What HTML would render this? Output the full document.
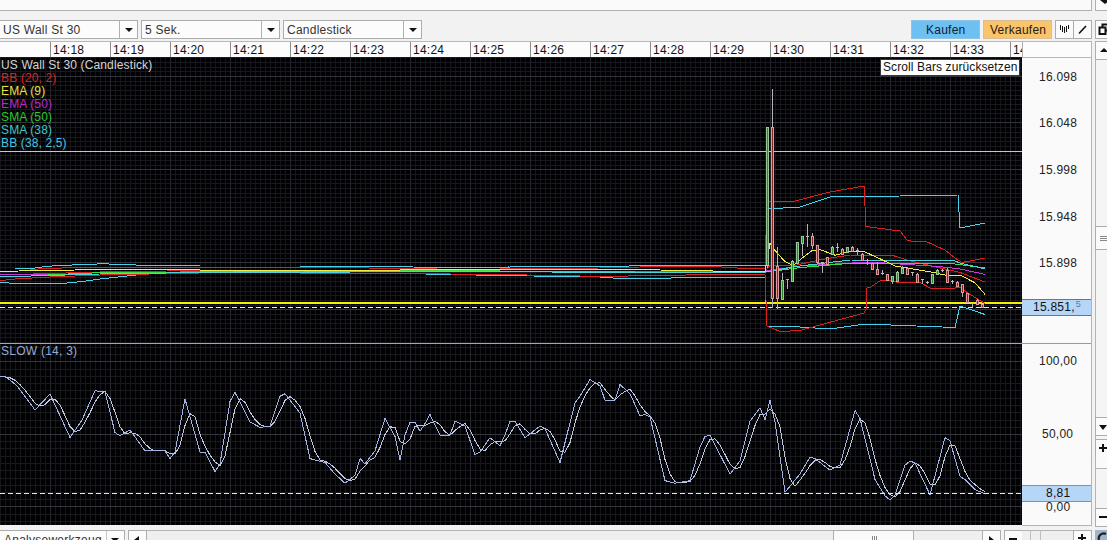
<!DOCTYPE html><html><head><meta charset="utf-8"><style>

html,body{margin:0;padding:0}
body{width:1107px;height:540px;overflow:hidden;position:relative;background:#f2f2f2;font-family:"Liberation Sans",sans-serif;font-size:12px;color:#222}
.a{position:absolute;box-sizing:border-box}
.t{position:absolute;white-space:nowrap;line-height:14px;letter-spacing:0.25px}
.cb{position:absolute;box-sizing:border-box;background:#fcfcfc;border:1px solid #acacac;height:19px}
.arr{position:absolute;width:0;height:0;border-left:4px solid transparent;border-right:4px solid transparent;border-top:4px solid #111}
.btn{position:absolute;box-sizing:border-box;background:#fbfbfb;border:1px solid #adadad}

</style></head><body>
<div class="a" style="left:-1px;top:-10px;width:1093px;height:21px;background:#fafafa;border:1px solid #b0b0b0"></div>
<div class="a" style="left:1095px;top:-10px;width:20px;height:21px;background:#fafafa;border:1px solid #b0b0b0"></div>
<div class="arr" style="left:1100px;top:0px;border-left-width:5px;border-right-width:5px;border-top-width:4px"></div>
<div class="cb" style="left:-1px;top:20px;width:139px"></div>
<div class="a" style="left:119px;top:21px;width:1px;height:17px;background:#b0b0b0"></div>
<div class="arr" style="left:125px;top:28px"></div>
<div class="t" style="left:3px;top:23px;color:#333">US Wall St 30</div>
<div class="cb" style="left:141px;top:20px;width:139px"></div>
<div class="a" style="left:261px;top:21px;width:1px;height:17px;background:#b0b0b0"></div>
<div class="arr" style="left:267px;top:28px"></div>
<div class="t" style="left:145px;top:23px;color:#333">5 Sek.</div>
<div class="cb" style="left:283px;top:20px;width:139px"></div>
<div class="a" style="left:403px;top:21px;width:1px;height:17px;background:#b0b0b0"></div>
<div class="arr" style="left:409px;top:28px"></div>
<div class="t" style="left:287px;top:23px;color:#333">Candlestick</div>
<div class="a" style="left:911px;top:20px;width:69px;height:19px;background:#6ec0f2;border:1px solid #8cc4e8"></div>
<div class="t" style="left:926px;top:23px;color:#0c1c3c">Kaufen</div>
<div class="a" style="left:983px;top:20px;width:69px;height:19px;background:#f8c46c;border:1px solid #dcbc94"></div>
<div class="t" style="left:990px;top:23px;color:#2c1c0c">Verkaufen</div>
<div class="btn" style="left:1055px;top:20px;width:19px;height:19px"></div>
<div class="btn" style="left:1073px;top:20px;width:19px;height:19px"></div>
<svg class="a" style="left:1055px;top:20px" width="40" height="19" viewBox="1055 20 40 19"><g fill="#111"><rect x="1060" y="25" width="1" height="5"/><rect x="1062" y="26" width="1" height="6"/><rect x="1064" y="27" width="1" height="6"/><rect x="1066" y="26" width="1" height="6"/><rect x="1068" y="25" width="1" height="4"/></g><line x1="1079" y1="33.5" x2="1086" y2="26" stroke="#111" stroke-width="1.6"/></svg>
<div class="btn" style="left:1095px;top:20px;width:20px;height:19px"></div>
<svg class="a" style="left:1095px;top:20px" width="12" height="19" viewBox="1095 20 12 19"><rect x="1102.5" y="24.5" width="8" height="6" fill="none" stroke="#111" stroke-width="2"/><rect x="1099.5" y="27.5" width="6" height="6.5" fill="#fbfbfb" stroke="#111" stroke-width="2"/></svg>
<div class="a" style="left:-1px;top:41px;width:1093px;height:17px;background:#fcfcfc;border:1px solid #b8b8b8;border-bottom:none"></div>
<div class="a" style="left:50px;top:42px;width:1px;height:15px;background:#8c8c8c"></div>
<div class="t" style="left:53px;top:43px;color:#111;width:60px;overflow:hidden">14:18</div>
<div class="a" style="left:110px;top:42px;width:1px;height:15px;background:#8c8c8c"></div>
<div class="t" style="left:113px;top:43px;color:#111;width:60px;overflow:hidden">14:19</div>
<div class="a" style="left:170px;top:42px;width:1px;height:15px;background:#8c8c8c"></div>
<div class="t" style="left:173px;top:43px;color:#111;width:60px;overflow:hidden">14:20</div>
<div class="a" style="left:230px;top:42px;width:1px;height:15px;background:#8c8c8c"></div>
<div class="t" style="left:233px;top:43px;color:#111;width:60px;overflow:hidden">14:21</div>
<div class="a" style="left:290px;top:42px;width:1px;height:15px;background:#8c8c8c"></div>
<div class="t" style="left:293px;top:43px;color:#111;width:60px;overflow:hidden">14:22</div>
<div class="a" style="left:350px;top:42px;width:1px;height:15px;background:#8c8c8c"></div>
<div class="t" style="left:353px;top:43px;color:#111;width:60px;overflow:hidden">14:23</div>
<div class="a" style="left:410px;top:42px;width:1px;height:15px;background:#8c8c8c"></div>
<div class="t" style="left:413px;top:43px;color:#111;width:60px;overflow:hidden">14:24</div>
<div class="a" style="left:470px;top:42px;width:1px;height:15px;background:#8c8c8c"></div>
<div class="t" style="left:473px;top:43px;color:#111;width:60px;overflow:hidden">14:25</div>
<div class="a" style="left:530px;top:42px;width:1px;height:15px;background:#8c8c8c"></div>
<div class="t" style="left:533px;top:43px;color:#111;width:60px;overflow:hidden">14:26</div>
<div class="a" style="left:590px;top:42px;width:1px;height:15px;background:#8c8c8c"></div>
<div class="t" style="left:593px;top:43px;color:#111;width:60px;overflow:hidden">14:27</div>
<div class="a" style="left:650px;top:42px;width:1px;height:15px;background:#8c8c8c"></div>
<div class="t" style="left:653px;top:43px;color:#111;width:60px;overflow:hidden">14:28</div>
<div class="a" style="left:710px;top:42px;width:1px;height:15px;background:#8c8c8c"></div>
<div class="t" style="left:713px;top:43px;color:#111;width:60px;overflow:hidden">14:29</div>
<div class="a" style="left:770px;top:42px;width:1px;height:15px;background:#8c8c8c"></div>
<div class="t" style="left:773px;top:43px;color:#111;width:60px;overflow:hidden">14:30</div>
<div class="a" style="left:830px;top:42px;width:1px;height:15px;background:#8c8c8c"></div>
<div class="t" style="left:833px;top:43px;color:#111;width:60px;overflow:hidden">14:31</div>
<div class="a" style="left:890px;top:42px;width:1px;height:15px;background:#8c8c8c"></div>
<div class="t" style="left:893px;top:43px;color:#111;width:60px;overflow:hidden">14:32</div>
<div class="a" style="left:950px;top:42px;width:1px;height:15px;background:#8c8c8c"></div>
<div class="t" style="left:953px;top:43px;color:#111;width:60px;overflow:hidden">14:33</div>
<div class="a" style="left:1010px;top:42px;width:1px;height:15px;background:#8c8c8c"></div>
<div class="t" style="left:1013px;top:43px;color:#111;width:9px;overflow:hidden">14:34</div>
<div class="a" style="left:1022px;top:41px;width:1px;height:16px;background:#b0b0b0"></div>
<svg width="1022" height="468" viewBox="0 57 1022 468" style="position:absolute;left:0;top:57px" shape-rendering="crispEdges"><rect x="0" y="57" width="1022" height="468" fill="#010104"/><path d="M0.5 57V343M5.5 57V343M10.5 57V343M15.5 57V343M20.5 57V343M25.5 57V343M30.5 57V343M35.5 57V343M40.5 57V343M45.5 57V343M55.5 57V343M60.5 57V343M65.5 57V343M70.5 57V343M75.5 57V343M80.5 57V343M85.5 57V343M90.5 57V343M95.5 57V343M100.5 57V343M105.5 57V343M115.5 57V343M120.5 57V343M125.5 57V343M130.5 57V343M135.5 57V343M140.5 57V343M145.5 57V343M150.5 57V343M155.5 57V343M160.5 57V343M165.5 57V343M175.5 57V343M180.5 57V343M185.5 57V343M190.5 57V343M195.5 57V343M200.5 57V343M205.5 57V343M210.5 57V343M215.5 57V343M220.5 57V343M225.5 57V343M235.5 57V343M240.5 57V343M245.5 57V343M250.5 57V343M255.5 57V343M260.5 57V343M265.5 57V343M270.5 57V343M275.5 57V343M280.5 57V343M285.5 57V343M295.5 57V343M300.5 57V343M305.5 57V343M310.5 57V343M315.5 57V343M320.5 57V343M325.5 57V343M330.5 57V343M335.5 57V343M340.5 57V343M345.5 57V343M355.5 57V343M360.5 57V343M365.5 57V343M370.5 57V343M375.5 57V343M380.5 57V343M385.5 57V343M390.5 57V343M395.5 57V343M400.5 57V343M405.5 57V343M415.5 57V343M420.5 57V343M425.5 57V343M430.5 57V343M435.5 57V343M440.5 57V343M445.5 57V343M450.5 57V343M455.5 57V343M460.5 57V343M465.5 57V343M475.5 57V343M480.5 57V343M485.5 57V343M490.5 57V343M495.5 57V343M500.5 57V343M505.5 57V343M510.5 57V343M515.5 57V343M520.5 57V343M525.5 57V343M535.5 57V343M540.5 57V343M545.5 57V343M550.5 57V343M555.5 57V343M560.5 57V343M565.5 57V343M570.5 57V343M575.5 57V343M580.5 57V343M585.5 57V343M595.5 57V343M600.5 57V343M605.5 57V343M610.5 57V343M615.5 57V343M620.5 57V343M625.5 57V343M630.5 57V343M635.5 57V343M640.5 57V343M645.5 57V343M655.5 57V343M660.5 57V343M665.5 57V343M670.5 57V343M675.5 57V343M680.5 57V343M685.5 57V343M690.5 57V343M695.5 57V343M700.5 57V343M705.5 57V343M715.5 57V343M720.5 57V343M725.5 57V343M730.5 57V343M735.5 57V343M740.5 57V343M745.5 57V343M750.5 57V343M755.5 57V343M760.5 57V343M765.5 57V343M775.5 57V343M780.5 57V343M785.5 57V343M790.5 57V343M795.5 57V343M800.5 57V343M805.5 57V343M810.5 57V343M815.5 57V343M820.5 57V343M825.5 57V343M835.5 57V343M840.5 57V343M845.5 57V343M850.5 57V343M855.5 57V343M860.5 57V343M865.5 57V343M870.5 57V343M875.5 57V343M880.5 57V343M885.5 57V343M895.5 57V343M900.5 57V343M905.5 57V343M910.5 57V343M915.5 57V343M920.5 57V343M925.5 57V343M930.5 57V343M935.5 57V343M940.5 57V343M945.5 57V343M955.5 57V343M960.5 57V343M965.5 57V343M970.5 57V343M975.5 57V343M980.5 57V343M985.5 57V343M990.5 57V343M995.5 57V343M1000.5 57V343M1005.5 57V343M1015.5 57V343M1020.5 57V343" stroke="#15161c" stroke-width="1"/><path d="M0 57.5H1022M0 62.5H1022M0 67.5H1022M0 71.5H1022M0 81.5H1022M0 85.5H1022M0 90.5H1022M0 95.5H1022M0 99.5H1022M0 104.5H1022M0 109.5H1022M0 113.5H1022M0 118.5H1022M0 127.5H1022M0 132.5H1022M0 137.5H1022M0 141.5H1022M0 146.5H1022M0 151.5H1022M0 155.5H1022M0 160.5H1022M0 165.5H1022M0 174.5H1022M0 179.5H1022M0 183.5H1022M0 188.5H1022M0 193.5H1022M0 197.5H1022M0 202.5H1022M0 207.5H1022M0 211.5H1022M0 221.5H1022M0 225.5H1022M0 230.5H1022M0 235.5H1022M0 239.5H1022M0 244.5H1022M0 249.5H1022M0 253.5H1022M0 258.5H1022M0 267.5H1022M0 272.5H1022M0 277.5H1022M0 281.5H1022M0 286.5H1022M0 291.5H1022M0 295.5H1022M0 300.5H1022M0 305.5H1022M0 314.5H1022M0 319.5H1022M0 323.5H1022M0 328.5H1022M0 333.5H1022M0 337.5H1022M0 342.5H1022" stroke="#18191f" stroke-width="1"/><path d="M50.5 57V343M110.5 57V343M170.5 57V343M230.5 57V343M290.5 57V343M350.5 57V343M410.5 57V343M470.5 57V343M530.5 57V343M590.5 57V343M650.5 57V343M710.5 57V343M770.5 57V343M830.5 57V343M890.5 57V343M950.5 57V343M1010.5 57V343" stroke="#26272e" stroke-width="1"/><path d="M0 76.5H1022M0 122.5H1022M0 169.5H1022M0 216.5H1022M0 262.5H1022M0 309.5H1022" stroke="#32343c" stroke-width="1"/><path d="M0.5 344V525M5.5 344V525M10.5 344V525M15.5 344V525M20.5 344V525M25.5 344V525M30.5 344V525M35.5 344V525M40.5 344V525M45.5 344V525M55.5 344V525M60.5 344V525M65.5 344V525M70.5 344V525M75.5 344V525M80.5 344V525M85.5 344V525M90.5 344V525M95.5 344V525M100.5 344V525M105.5 344V525M115.5 344V525M120.5 344V525M125.5 344V525M130.5 344V525M135.5 344V525M140.5 344V525M145.5 344V525M150.5 344V525M155.5 344V525M160.5 344V525M165.5 344V525M175.5 344V525M180.5 344V525M185.5 344V525M190.5 344V525M195.5 344V525M200.5 344V525M205.5 344V525M210.5 344V525M215.5 344V525M220.5 344V525M225.5 344V525M235.5 344V525M240.5 344V525M245.5 344V525M250.5 344V525M255.5 344V525M260.5 344V525M265.5 344V525M270.5 344V525M275.5 344V525M280.5 344V525M285.5 344V525M295.5 344V525M300.5 344V525M305.5 344V525M310.5 344V525M315.5 344V525M320.5 344V525M325.5 344V525M330.5 344V525M335.5 344V525M340.5 344V525M345.5 344V525M355.5 344V525M360.5 344V525M365.5 344V525M370.5 344V525M375.5 344V525M380.5 344V525M385.5 344V525M390.5 344V525M395.5 344V525M400.5 344V525M405.5 344V525M415.5 344V525M420.5 344V525M425.5 344V525M430.5 344V525M435.5 344V525M440.5 344V525M445.5 344V525M450.5 344V525M455.5 344V525M460.5 344V525M465.5 344V525M475.5 344V525M480.5 344V525M485.5 344V525M490.5 344V525M495.5 344V525M500.5 344V525M505.5 344V525M510.5 344V525M515.5 344V525M520.5 344V525M525.5 344V525M535.5 344V525M540.5 344V525M545.5 344V525M550.5 344V525M555.5 344V525M560.5 344V525M565.5 344V525M570.5 344V525M575.5 344V525M580.5 344V525M585.5 344V525M595.5 344V525M600.5 344V525M605.5 344V525M610.5 344V525M615.5 344V525M620.5 344V525M625.5 344V525M630.5 344V525M635.5 344V525M640.5 344V525M645.5 344V525M655.5 344V525M660.5 344V525M665.5 344V525M670.5 344V525M675.5 344V525M680.5 344V525M685.5 344V525M690.5 344V525M695.5 344V525M700.5 344V525M705.5 344V525M715.5 344V525M720.5 344V525M725.5 344V525M730.5 344V525M735.5 344V525M740.5 344V525M745.5 344V525M750.5 344V525M755.5 344V525M760.5 344V525M765.5 344V525M775.5 344V525M780.5 344V525M785.5 344V525M790.5 344V525M795.5 344V525M800.5 344V525M805.5 344V525M810.5 344V525M815.5 344V525M820.5 344V525M825.5 344V525M835.5 344V525M840.5 344V525M845.5 344V525M850.5 344V525M855.5 344V525M860.5 344V525M865.5 344V525M870.5 344V525M875.5 344V525M880.5 344V525M885.5 344V525M895.5 344V525M900.5 344V525M905.5 344V525M910.5 344V525M915.5 344V525M920.5 344V525M925.5 344V525M930.5 344V525M935.5 344V525M940.5 344V525M945.5 344V525M955.5 344V525M960.5 344V525M965.5 344V525M970.5 344V525M975.5 344V525M980.5 344V525M985.5 344V525M990.5 344V525M995.5 344V525M1000.5 344V525M1005.5 344V525M1015.5 344V525M1020.5 344V525" stroke="#16171b" stroke-width="1"/><path d="M0 347.5H1022M0 354.5H1022M0 369.5H1022M0 376.5H1022M0 383.5H1022M0 390.5H1022M0 398.5H1022M0 405.5H1022M0 412.5H1022M0 420.5H1022M0 427.5H1022M0 441.5H1022M0 448.5H1022M0 456.5H1022M0 463.5H1022M0 470.5H1022M0 478.5H1022M0 485.5H1022M0 492.5H1022M0 499.5H1022M0 514.5H1022M0 521.5H1022" stroke="#191a1e" stroke-width="1"/><path d="M50.5 344V525M110.5 344V525M170.5 344V525M230.5 344V525M290.5 344V525M350.5 344V525M410.5 344V525M470.5 344V525M530.5 344V525M590.5 344V525M650.5 344V525M710.5 344V525M770.5 344V525M830.5 344V525M890.5 344V525M950.5 344V525M1010.5 344V525" stroke="#26272e" stroke-width="1"/><path d="M0 361.5H1022M0 434.5H1022M0 506.5H1022" stroke="#34363c" stroke-width="1"/><path d="M0 343.5H1022" stroke="#a6a6ae" stroke-width="1"/></svg>
<svg width="1022" height="468" viewBox="0 57 1022 468" style="position:absolute;left:0;top:57px"><rect x="0" y="151" width="1022" height="1" fill="#d8d840"/><rect x="0" y="302" width="1022" height="2" fill="#f4f000"/><line x1="0" y1="307.5" x2="1022" y2="307.5" stroke="#e8e8e8" stroke-width="1" stroke-dasharray="5,3" shape-rendering="crispEdges"/><polyline points="15,269 32,268.5 42,267 52,266 72,265 92,264.5 100,263.7 150,265.5 200,266 300,266 400,266.6 430,267.5 460,267.5 560,266.5 617,266.5 642,265.5 765,265.7 767,209 800,207 830,197 900,196 958,195 960,228 985,223" fill="none" stroke="#48d0ec" stroke-width="1.0" stroke-linejoin="round" shape-rendering="crispEdges" /><polyline points="0,282.5 17,283.5 62,283.5 82,281.5 100,279 150,273.5 200,272 300,272.5 400,273.5 500,275.5 600,277 617,278.3 662,278.3 700,277.1 765,277.1 767,326 800,327 830,329 865,324 955,327.5 960,306 985,314.5" fill="none" stroke="#48d0ec" stroke-width="1.0" stroke-linejoin="round" shape-rendering="crispEdges" /><polyline points="30,269.5 52,268.2 100,267.3 200,267 300,267 437,269 500,269 600,268 652,266.7 717,266.7 745,268.5 765,268.5 767,201 795,201 830,192 864,186 866,226.5 900,231 907,240 915,242 925,241 945,250 955,258 962,262.5 985,258" fill="none" stroke="#dc2020" stroke-width="1.0" stroke-linejoin="round" shape-rendering="crispEdges" /><polyline points="0,280.7 12,279.2 32,278 50,277 100,275 200,273 300,273 400,273.5 500,274.5 617,276.7 640,275.3 765,274.5 767,326 780,331.5 800,330.5 864,313 866,309 867,288 870,287.5 880,280.8 890,280.5 900,282.8 920,282.5 930,288 955,288 960,287.3 970,294.4 985,303.5" fill="none" stroke="#dc2020" stroke-width="1.0" stroke-linejoin="round" shape-rendering="crispEdges" /><polyline points="0,275 100,272 200,270.5 300,270.5 500,271.5 765,271.5 770,265.4 795,265.4 820,259.8 850,255 873,255.5 893,255.5 905,259.4 915,262 940,267.9 960,272.4 985,282" fill="none" stroke="#dc2020" stroke-width="1.0" stroke-linejoin="round" shape-rendering="crispEdges" /><polyline points="0,274.4 25,274.4 50,275 100,274 200,271.5 300,271.5 500,271 765,271 800,266 870,262 900,264 940,266.6 960,269 985,274.4" fill="none" stroke="#c438dc" stroke-width="1.0" stroke-linejoin="round" shape-rendering="crispEdges" /><polyline points="48,275 68,274 92,273 200,272 420,270.8 500,271 660,272.2 765,272.2 800,267.6 850,263.3 955,264 985,268" fill="none" stroke="#38e040" stroke-width="1.0" stroke-linejoin="round" shape-rendering="crispEdges" /><polyline points="0,276.2 25,276.2 100,274 300,271 600,272.2 765,272 800,266 850,260 955,261 960,263 985,269" fill="none" stroke="#48d4d8" stroke-width="1.0" stroke-linejoin="round" shape-rendering="crispEdges" /><polyline points="0,271.3 50,270.5 100,269.5 200,270 400,270 600,269.5 660,270 765,272 767,259 770,243.5 775,250.5 785,261.7 793,265.4 800,259.8 812,250.5 820,249.6 835,255.2 850,251.7 865,252 880,258.8 895,266 910,268.5 930,271.8 945,275 960,275 975,282.8 985,294.4" fill="none" stroke="#f0ec40" stroke-width="1.0" stroke-linejoin="round" shape-rendering="crispEdges" /><rect x="767" y="127" width="1" height="141" fill="#b4b4b4" shape-rendering="crispEdges"/><rect x="766" y="127" width="3" height="139" fill="#98c898" shape-rendering="crispEdges"/><rect x="767" y="128" width="1" height="137" fill="#2c8a2c" shape-rendering="crispEdges"/><rect x="772" y="89" width="1" height="219" fill="#b4b4b4" shape-rendering="crispEdges"/><rect x="771" y="127" width="3" height="172" fill="#e09c9c" shape-rendering="crispEdges"/><rect x="772" y="128" width="1" height="170" fill="#8a2424" shape-rendering="crispEdges"/><rect x="777" y="247" width="1" height="62" fill="#b4b4b4" shape-rendering="crispEdges"/><rect x="776" y="266" width="3" height="33" fill="#e09c9c" shape-rendering="crispEdges"/><rect x="777" y="267" width="1" height="31" fill="#8a2424" shape-rendering="crispEdges"/><rect x="782" y="273" width="1" height="27" fill="#b4b4b4" shape-rendering="crispEdges"/><rect x="781" y="280" width="3" height="20" fill="#98c898" shape-rendering="crispEdges"/><rect x="782" y="281" width="1" height="18" fill="#2c8a2c" shape-rendering="crispEdges"/><rect x="787" y="279" width="1" height="10" fill="#b4b4b4" shape-rendering="crispEdges"/><rect x="786" y="279" width="3" height="1" fill="#c0c0c0" shape-rendering="crispEdges"/><rect x="792" y="260" width="1" height="22" fill="#b4b4b4" shape-rendering="crispEdges"/><rect x="791" y="261" width="3" height="21" fill="#98c898" shape-rendering="crispEdges"/><rect x="792" y="262" width="1" height="19" fill="#2c8a2c" shape-rendering="crispEdges"/><rect x="797" y="242" width="1" height="22" fill="#b4b4b4" shape-rendering="crispEdges"/><rect x="796" y="242" width="3" height="22" fill="#98c898" shape-rendering="crispEdges"/><rect x="797" y="243" width="1" height="20" fill="#2c8a2c" shape-rendering="crispEdges"/><rect x="802" y="236" width="1" height="20" fill="#b4b4b4" shape-rendering="crispEdges"/><rect x="801" y="236" width="3" height="8" fill="#98c898" shape-rendering="crispEdges"/><rect x="802" y="237" width="1" height="6" fill="#2c8a2c" shape-rendering="crispEdges"/><rect x="807" y="224" width="1" height="23" fill="#b4b4b4" shape-rendering="crispEdges"/><rect x="806" y="236" width="3" height="1" fill="#c0c0c0" shape-rendering="crispEdges"/><rect x="812" y="233" width="1" height="16" fill="#b4b4b4" shape-rendering="crispEdges"/><rect x="811" y="236" width="3" height="10" fill="#e09c9c" shape-rendering="crispEdges"/><rect x="812" y="237" width="1" height="8" fill="#8a2424" shape-rendering="crispEdges"/><rect x="817" y="245" width="1" height="18" fill="#b4b4b4" shape-rendering="crispEdges"/><rect x="816" y="245" width="3" height="18" fill="#e09c9c" shape-rendering="crispEdges"/><rect x="817" y="246" width="1" height="16" fill="#8a2424" shape-rendering="crispEdges"/><rect x="822" y="262" width="1" height="11" fill="#b4b4b4" shape-rendering="crispEdges"/><rect x="821" y="262" width="3" height="1" fill="#c0c0c0" shape-rendering="crispEdges"/><rect x="827" y="257" width="1" height="7" fill="#b4b4b4" shape-rendering="crispEdges"/><rect x="826" y="257" width="3" height="8" fill="#e09c9c" shape-rendering="crispEdges"/><rect x="827" y="258" width="1" height="6" fill="#8a2424" shape-rendering="crispEdges"/><rect x="832" y="246" width="1" height="9" fill="#b4b4b4" shape-rendering="crispEdges"/><rect x="831" y="247" width="3" height="8" fill="#98c898" shape-rendering="crispEdges"/><rect x="832" y="248" width="1" height="6" fill="#2c8a2c" shape-rendering="crispEdges"/><rect x="837" y="243" width="1" height="9" fill="#b4b4b4" shape-rendering="crispEdges"/><rect x="836" y="247" width="3" height="1" fill="#c0c0c0" shape-rendering="crispEdges"/><rect x="842" y="248" width="1" height="7" fill="#b4b4b4" shape-rendering="crispEdges"/><rect x="841" y="249" width="3" height="6" fill="#e09c9c" shape-rendering="crispEdges"/><rect x="842" y="250" width="1" height="4" fill="#8a2424" shape-rendering="crispEdges"/><rect x="847" y="247" width="1" height="5" fill="#b4b4b4" shape-rendering="crispEdges"/><rect x="846" y="247" width="3" height="6" fill="#98c898" shape-rendering="crispEdges"/><rect x="847" y="248" width="1" height="4" fill="#2c8a2c" shape-rendering="crispEdges"/><rect x="852" y="246" width="1" height="6" fill="#b4b4b4" shape-rendering="crispEdges"/><rect x="851" y="247" width="3" height="5" fill="#e09c9c" shape-rendering="crispEdges"/><rect x="852" y="248" width="1" height="3" fill="#8a2424" shape-rendering="crispEdges"/><rect x="857" y="248" width="1" height="7" fill="#b4b4b4" shape-rendering="crispEdges"/><rect x="856" y="250" width="3" height="1" fill="#c0c0c0" shape-rendering="crispEdges"/><rect x="862" y="253" width="1" height="8" fill="#b4b4b4" shape-rendering="crispEdges"/><rect x="861" y="254" width="3" height="7" fill="#e09c9c" shape-rendering="crispEdges"/><rect x="862" y="255" width="1" height="5" fill="#8a2424" shape-rendering="crispEdges"/><rect x="867" y="259" width="1" height="6" fill="#b4b4b4" shape-rendering="crispEdges"/><rect x="866" y="260" width="3" height="1" fill="#c0c0c0" shape-rendering="crispEdges"/><rect x="872" y="263" width="1" height="7" fill="#b4b4b4" shape-rendering="crispEdges"/><rect x="871" y="263" width="3" height="7" fill="#e09c9c" shape-rendering="crispEdges"/><rect x="872" y="264" width="1" height="5" fill="#8a2424" shape-rendering="crispEdges"/><rect x="877" y="261.5" width="1" height="13.5" fill="#b4b4b4" shape-rendering="crispEdges"/><rect x="876" y="269" width="3" height="6" fill="#e09c9c" shape-rendering="crispEdges"/><rect x="877" y="270" width="1" height="4" fill="#8a2424" shape-rendering="crispEdges"/><rect x="882" y="270" width="1" height="5" fill="#b4b4b4" shape-rendering="crispEdges"/><rect x="881" y="273" width="3" height="1" fill="#c0c0c0" shape-rendering="crispEdges"/><rect x="887" y="274" width="1" height="7" fill="#b4b4b4" shape-rendering="crispEdges"/><rect x="886" y="274" width="3" height="7" fill="#e09c9c" shape-rendering="crispEdges"/><rect x="887" y="275" width="1" height="5" fill="#8a2424" shape-rendering="crispEdges"/><rect x="892" y="276" width="1" height="8" fill="#b4b4b4" shape-rendering="crispEdges"/><rect x="891" y="276" width="3" height="6" fill="#98c898" shape-rendering="crispEdges"/><rect x="892" y="277" width="1" height="4" fill="#2c8a2c" shape-rendering="crispEdges"/><rect x="897" y="271" width="1" height="11" fill="#b4b4b4" shape-rendering="crispEdges"/><rect x="896" y="272" width="3" height="10" fill="#98c898" shape-rendering="crispEdges"/><rect x="897" y="273" width="1" height="8" fill="#2c8a2c" shape-rendering="crispEdges"/><rect x="902" y="266" width="1" height="8" fill="#b4b4b4" shape-rendering="crispEdges"/><rect x="901" y="268" width="3" height="6" fill="#98c898" shape-rendering="crispEdges"/><rect x="902" y="269" width="1" height="4" fill="#2c8a2c" shape-rendering="crispEdges"/><rect x="907" y="267" width="1" height="8" fill="#b4b4b4" shape-rendering="crispEdges"/><rect x="906" y="268" width="3" height="7" fill="#e09c9c" shape-rendering="crispEdges"/><rect x="907" y="269" width="1" height="5" fill="#8a2424" shape-rendering="crispEdges"/><rect x="912" y="272" width="1" height="3.5" fill="#b4b4b4" shape-rendering="crispEdges"/><rect x="911" y="272" width="3" height="1" fill="#c0c0c0" shape-rendering="crispEdges"/><rect x="917" y="273" width="1" height="10" fill="#b4b4b4" shape-rendering="crispEdges"/><rect x="916" y="274" width="3" height="9" fill="#e09c9c" shape-rendering="crispEdges"/><rect x="917" y="275" width="1" height="7" fill="#8a2424" shape-rendering="crispEdges"/><rect x="922" y="279" width="1" height="5" fill="#b4b4b4" shape-rendering="crispEdges"/><rect x="921" y="279" width="3" height="1" fill="#c0c0c0" shape-rendering="crispEdges"/><rect x="927" y="281" width="1" height="3" fill="#b4b4b4" shape-rendering="crispEdges"/><rect x="926" y="282" width="3" height="1" fill="#c0c0c0" shape-rendering="crispEdges"/><rect x="932" y="274" width="1" height="10" fill="#b4b4b4" shape-rendering="crispEdges"/><rect x="931" y="274" width="3" height="10" fill="#98c898" shape-rendering="crispEdges"/><rect x="932" y="275" width="1" height="8" fill="#2c8a2c" shape-rendering="crispEdges"/><rect x="937" y="269" width="1" height="6" fill="#b4b4b4" shape-rendering="crispEdges"/><rect x="936" y="270" width="3" height="5" fill="#98c898" shape-rendering="crispEdges"/><rect x="937" y="271" width="1" height="3" fill="#2c8a2c" shape-rendering="crispEdges"/><rect x="942" y="269" width="1" height="3" fill="#b4b4b4" shape-rendering="crispEdges"/><rect x="941" y="270" width="3" height="1" fill="#c0c0c0" shape-rendering="crispEdges"/><rect x="947" y="268" width="1" height="15" fill="#b4b4b4" shape-rendering="crispEdges"/><rect x="946" y="270" width="3" height="13" fill="#e09c9c" shape-rendering="crispEdges"/><rect x="947" y="271" width="1" height="11" fill="#8a2424" shape-rendering="crispEdges"/><rect x="952" y="280" width="1" height="4" fill="#b4b4b4" shape-rendering="crispEdges"/><rect x="951" y="281" width="3" height="1" fill="#c0c0c0" shape-rendering="crispEdges"/><rect x="957" y="281" width="1" height="5" fill="#b4b4b4" shape-rendering="crispEdges"/><rect x="956" y="282" width="3" height="5" fill="#e09c9c" shape-rendering="crispEdges"/><rect x="957" y="283" width="1" height="3" fill="#8a2424" shape-rendering="crispEdges"/><rect x="962" y="284" width="1" height="13" fill="#b4b4b4" shape-rendering="crispEdges"/><rect x="961" y="284" width="3" height="9" fill="#e09c9c" shape-rendering="crispEdges"/><rect x="962" y="285" width="1" height="7" fill="#8a2424" shape-rendering="crispEdges"/><rect x="967" y="293" width="1" height="10" fill="#b4b4b4" shape-rendering="crispEdges"/><rect x="966" y="293" width="3" height="10" fill="#e09c9c" shape-rendering="crispEdges"/><rect x="967" y="294" width="1" height="8" fill="#8a2424" shape-rendering="crispEdges"/><rect x="972" y="303" width="1" height="4" fill="#b4b4b4" shape-rendering="crispEdges"/><rect x="971" y="303" width="3" height="1" fill="#c0c0c0" shape-rendering="crispEdges"/><rect x="977" y="299" width="1" height="5" fill="#b4b4b4" shape-rendering="crispEdges"/><rect x="976" y="300" width="3" height="5" fill="#e09c9c" shape-rendering="crispEdges"/><rect x="977" y="301" width="1" height="3" fill="#8a2424" shape-rendering="crispEdges"/><rect x="982" y="304" width="1" height="3" fill="#b4b4b4" shape-rendering="crispEdges"/><rect x="981" y="304" width="3" height="4" fill="#e09c9c" shape-rendering="crispEdges"/><rect x="982" y="305" width="1" height="2" fill="#8a2424" shape-rendering="crispEdges"/><polyline points="0,376.7 5,376.7 10,377.8 15,380.2809523809524 20,384.6587301587302 25,390.17724867724866 30,396.5555555555556 35,403.27777777777777 40,405.98148148148147 45,404.6666666666667 50,399.3333333333333 55,399.40277777777777 60,404.875 65,415.75 70,426.625 75,431.4444444444444 80,430.2083333333333 85,422.12884615384615 90,412.7363247863248 95,402.03076923076924 100,394.7435897435898 105,391.40000000000003 110,398.56666666666666 115,412.3 120,426.8666666666666 125,433.7166666666667 130,432.84999999999997 135,433.2611111111111 140,436.93333333333334 145,443.8666666666666 150,448.4888888888889 155,450.8 160,450.8 165,450.8 170,453.40000000000003 175,453.8 180,445.34999999999997 185,425.45 190,413.6499999999999 195,416.59999999999997 200,434.3 205,446.09999999999997 210,455.25 215,461.75 220,465.68333333333334 225,455.98333333333335 230,432.65000000000003 235,408.84999999999997 240,398.7222222222222 245,402.26666666666665 250,412.1333333333334 255,419.6111111111111 260,424.7 265,426.26666666666665 270,426.7 275,421.2833333333333 280,411.15000000000003 285,400.3833333333334 290,396.71111111111105 295,400.1333333333334 300,406.56666666666666 305,418.4555555555556 310,435.8 315,451.4333333333334 320,459.90000000000003 325,461.2 330,463.98333333333335 335,468.25 340,473.6166666666666 345,478.59999999999997 350,480.3666666666666 355,479.29999999999995 360,471.09999999999997 365,465.93333333333334 370,459.90000000000003 375,457.3 380,447.56666666666666 385,434.59999999999997 390,426.81666666666666 395,427.45 400,441.31666666666666 405,443.90000000000003 410,439.06666666666666 415,426.40000000000003 420,425.09999999999997 425,425.6333333333334 430,423.1333333333334 435,420.98333333333335 440,424.84999999999997 445,431.75 450,435.2 455,430.4666666666667 460,426.5833333333333 465,423.55 470,430.01666666666665 475,440.40000000000003 480,449.0333333333333 485,450.5333333333333 490,444.90000000000003 495,441.4666666666667 500,441.70000000000005 505,440.8333333333333 510,433.93333333333334 515,425.73333333333335 520,423.8 525,429.40000000000003 530,433.68888888888887 535,433.8666666666666 540,429.93333333333334 545,428.21111111111105 550,431.5555555555555 555,439.9666666666667 560,451.23333333333335 565,452.11111111111114 570,442.59999999999997 575,422.7 580,407.26666666666665 585,395.6666666666667 590,387.90000000000003 595,383.3833333333334 600,382.75 605,389.65000000000003 610,395.4666666666667 615,400.2 620,395.0 625,391.31666666666666 630,389.15000000000003 635,395.8666666666666 640,404.75 645,411.68333333333334 650,415.76666666666665 655,423.23333333333335 660,438.2 665,459.40000000000003 670,473.9666666666667 675,481.90000000000003 680,482.4777777777778 685,482.3333333333333 690,481.4666666666667 695,475.28888888888895 700,463.8 705,449.09999999999997 710,439.56666666666666 715,438.8666666666666 720,444.90000000000003 725,454.59999999999997 730,464.3 735,468.59999999999997 740,467.5 745,456.5 750,441.0 755,425.5 760,414.5 765,414.06666666666666 770,409.3 775,414.06666666666666 780,426.59999999999997 785,457.3 790,478.59999999999997 795,486.2 800,480.09999999999997 805,473.25 810,465.65000000000003 815,460.51666666666665 820,459.4555555555556 825,462.4666666666667 830,466.3333333333333 835,468.0444444444444 840,467.59999999999997 845,459.82222222222225 850,446.8666666666666 855,428.73333333333335 860,419.24444444444447 865,422.5888888888889 870,438.76666666666665 875,459.1333333333334 880,475.42777777777775 885,487.65000000000003 890,494.45 895,496.8333333333333 900,491.56666666666666 905,480.0 910,468.73333333333335 915,463.06666666666666 920,465.8666666666666 925,473.59999999999997 930,484.2 935,484.9222222222222 940,475.76666666666665 945,456.73333333333335 950,445.0777777777778 955,445.7 960,458.59999999999997 965,471.5 970,480.1666666666667 975,484.59999999999997 980,488.6666666666667 985,491.7" fill="none" stroke="#c2c8da" stroke-width="1.0" stroke-linejoin="round" shape-rendering="crispEdges" /><polyline points="0,376.7 5,376.7 10,380 17,385.8 35,410 50,394 70,437.5 82,420 95,390.8 105,392 115,432.6 120,435.7 130,430 145,450.8 165,450.8 170,458.6 175,452 185,398.9 200,452 205,452 215,471.5 220,463.8 230,401.5 235,392.4 250,422 260,427.4 270,426 280,396.3 285,393.7 300,413 310,458.6 325,462.5 335,474 345,483.2 355,475.4 360,458.6 365,463.8 375,450.8 385,418.4 395,436.5 400,460 405,435.2 410,422 415,422 420,431.3 425,423.6 430,414.5 440,435.2 450,435.2 455,421 465,426.1 475,454.7 480,452 490,437.8 500,445.6 505,435.2 510,421 515,421 525,437.8 540,426 545,428.7 560,462.5 575,402.8 580,396.3 590,379.5 600,386 605,400.2 615,400.2 620,384.6 630,393.7 640,415.8 645,414.5 650,417 665,480.6 675,483.2 690,480.6 700,447 705,436.5 710,435.2 730,474 740,461 750,421 760,408 765,419.7 770,400.2 775,422.3 785,492.3 800,474 810,457.3 815,458.6 830,470.2 840,465 855,410.6 860,418.4 875,479.5 885,495.8 890,499.9 895,494.8 905,465.2 910,461 915,463 930,494.8 945,437.7 950,440.8 960,476.4 965,479.5 975,489.7 985,493.7" fill="none" stroke="#a2b2e2" stroke-width="1.0" stroke-linejoin="round" shape-rendering="crispEdges" /><line x1="0" y1="493.5" x2="1022" y2="493.5" stroke="#e8e8e8" stroke-width="1" stroke-dasharray="5,3" shape-rendering="crispEdges"/></svg>
<div class="t" style="left:1px;top:58px;color:#d4d4d4;letter-spacing:0.14px">US Wall St 30 (Candlestick)</div>
<div class="t" style="left:1px;top:71px;color:#e02020;letter-spacing:0.14px">BB (20, 2)</div>
<div class="t" style="left:1px;top:84px;color:#e8e040;letter-spacing:0.14px">EMA (9)</div>
<div class="t" style="left:1px;top:97px;color:#c028c8;letter-spacing:0.14px">EMA (50)</div>
<div class="t" style="left:1px;top:110px;color:#28c828;letter-spacing:0.14px">SMA (50)</div>
<div class="t" style="left:1px;top:123px;color:#40c4c4;letter-spacing:0.14px">SMA (38)</div>
<div class="t" style="left:1px;top:136px;color:#48c4e4;letter-spacing:0.14px">BB (38, 2,5)</div>
<div class="t" style="left:1px;top:344px;color:#9aaad2">SLOW (14, 3)</div>
<div class="a" style="left:880px;top:59px;width:140px;height:17px;background:#fdfdfd;border:1px solid #383838"></div>
<div class="t" style="left:883px;top:60px;color:#111;letter-spacing:0.1px">Scroll Bars zurücksetzen</div>
<div class="a" style="left:1022px;top:57px;width:70px;height:469px;background:#fafafa;border-right:1px solid #b4b4b4;border-bottom:1px solid #b4b4b4"></div>
<div class="a" style="left:1022px;top:343px;width:69px;height:1px;background:#9c9c9c"></div>
<div class="a" style="left:1022px;top:57px;width:69px;height:1px;background:#b8b8b8"></div>
<div class="t" style="left:1039px;top:70px;color:#222">16.098</div>
<div class="t" style="left:1039px;top:116px;color:#222">16.048</div>
<div class="t" style="left:1039px;top:163px;color:#222">15.998</div>
<div class="t" style="left:1039px;top:210px;color:#222">15.948</div>
<div class="t" style="left:1039px;top:256px;color:#222">15.898</div>
<div class="a" style="left:1022px;top:299px;width:69px;height:17px;background:#b6d6f8;border-top:1px solid #6c7488;border-bottom:1px solid #6c7488"></div>
<div class="t" style="left:1033px;top:300px;color:#111">15.851,<span style="font-size:9px;color:#6078a0;position:relative;top:-4px;left:1px">5</span></div>
<div class="t" style="left:1039px;top:354px;color:#222">100,00</div>
<div class="t" style="left:1042px;top:427px;color:#222">50,00</div>
<div class="a" style="left:1022px;top:485px;width:69px;height:17px;background:#b6d6f8;border-top:1px solid #8890a0;border-bottom:1px solid #8890a0"></div>
<div class="t" style="left:1046px;top:486px;color:#111">8,81</div>
<div class="t" style="left:1046px;top:500px;color:#222">0,00</div>
<div class="a" style="left:1095px;top:41px;width:14px;height:486px;background:#f5f5f5;border-left:1px solid #b4b4b4"></div>
<div class="btn" style="left:1095px;top:41px;width:14px;height:19px"></div>
<div class="arr" style="left:1100px;top:48px;border-top:none;border-bottom:4px solid #111"></div>
<div class="btn" style="left:1095px;top:226px;width:14px;height:24px;background:#fafafa"></div>
<div class="a" style="left:1100px;top:236px;width:7px;height:1px;background:#888"></div>
<div class="a" style="left:1100px;top:238px;width:7px;height:1px;background:#888"></div>
<div class="a" style="left:1100px;top:240px;width:7px;height:1px;background:#888"></div>
<div class="btn" style="left:1095px;top:417px;width:14px;height:19px"></div>
<div class="arr" style="left:1099px;top:425px;border-top-width:5px"></div>
<div class="btn" style="left:1095px;top:439px;width:14px;height:19px"></div>
<div class="a" style="left:1099px;top:447px;width:9px;height:2px;background:#111"></div>
<div class="a" style="left:1102px;top:444px;width:2px;height:8px;background:#111"></div>
<div class="a" style="left:1095px;top:457px;width:14px;height:12px;background:#fafafa;border-left:1px solid #b4b4b4;border-bottom:1px solid #b4b4b4"></div>
<div class="btn" style="left:1095px;top:508px;width:14px;height:19px"></div>
<div class="a" style="left:1099px;top:516px;width:9px;height:2px;background:#111"></div>
<div class="a" style="left:-1px;top:530px;width:126px;height:20px;background:#fcfcfc;border:1px solid #acacac"></div>
<div class="a" style="left:106px;top:531px;width:1px;height:10px;background:#c8c8c8"></div>
<div class="t" style="left:4px;top:533px;color:#333">Analysewerkzeug</div>
<div class="arr" style="left:111px;top:538px"></div>
<div class="btn" style="left:128px;top:530px;width:19px;height:20px"></div>
<div class="arr" style="left:134px;top:536px;border-top:4px solid transparent;border-bottom:4px solid transparent;border-right:5px solid #111;border-left:none"></div>
<div class="a" style="left:147px;top:530px;width:836px;height:20px;background:#efefef;border-top:1px solid #b4b4b4"></div>
<div class="btn" style="left:833px;top:530px;width:81px;height:20px;background:#fafafa"></div>
<div class="a" style="left:872px;top:536px;width:1px;height:5px;background:#888"></div><div class="a" style="left:874px;top:536px;width:1px;height:5px;background:#888"></div><div class="a" style="left:876px;top:536px;width:1px;height:5px;background:#888"></div>
<div class="btn" style="left:982px;top:530px;width:19px;height:20px"></div>
<div class="arr" style="left:989px;top:536px;border-top:4px solid transparent;border-bottom:4px solid transparent;border-left:5px solid #111;border-right:none"></div>
<div class="btn" style="left:1004px;top:530px;width:19px;height:20px"></div>
<div class="a" style="left:1009px;top:538px;width:8px;height:2px;background:#111"></div>
<div class="a" style="left:1022px;top:530px;width:52px;height:20px;background:#efefef;border-top:1px solid #b4b4b4"></div>
<div class="a" style="left:1030px;top:531px;width:1px;height:10px;background:#c0c0c0"></div>
<div class="a" style="left:1040px;top:531px;width:1px;height:10px;background:#c0c0c0"></div>
<div class="btn" style="left:1073px;top:530px;width:19px;height:20px"></div>
<div class="a" style="left:1078px;top:537px;width:8px;height:2px;background:#111"></div><div class="a" style="left:1081px;top:534px;width:2px;height:8px;background:#111"></div>
<div class="a" style="left:1095px;top:530px;width:14px;height:12px;background:#a4b4c8"></div>
<svg class="a" style="left:1095px;top:530px" width="12" height="10" viewBox="0 0 12 10"><path d="M4 10 A5 5 0 0 1 11 4" fill="none" stroke="#1a2030" stroke-width="2.2"/></svg>
</body></html>
